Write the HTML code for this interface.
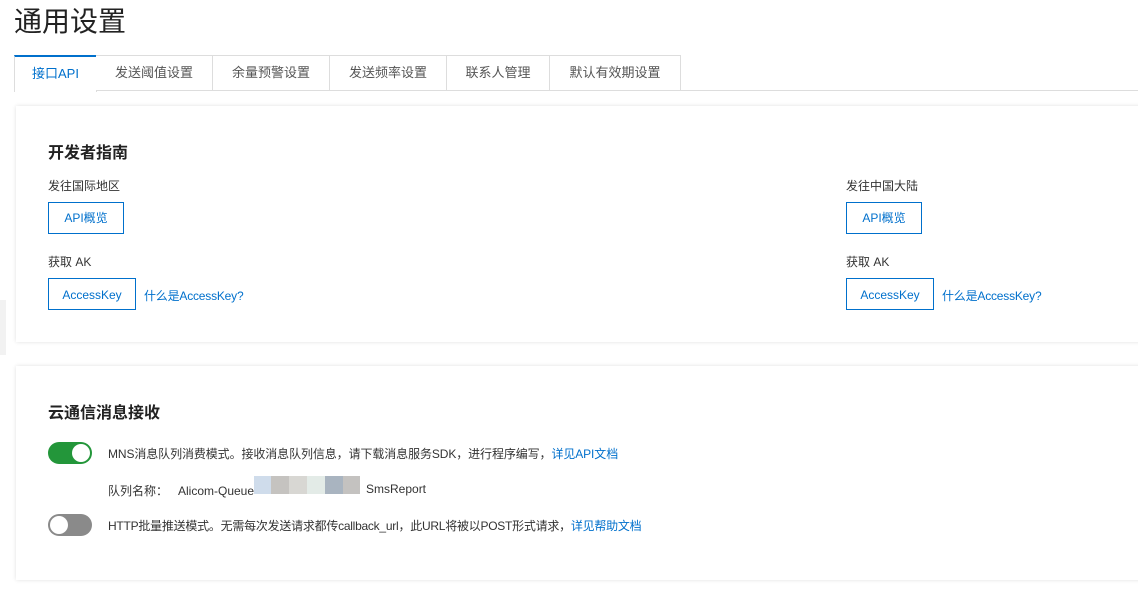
<!DOCTYPE html>
<html><head><meta charset="utf-8"><style>
body{margin:0;width:1138px;height:590px;background:#fff;font-family:"Liberation Sans","Noto Sans CJK SC",sans-serif;color:#333;position:relative;overflow:hidden;font-size:12px}
.abs{position:absolute}
h1{position:absolute;left:14px;top:2px;margin:0;font-size:28px;font-weight:normal;color:#222;line-height:40px}
.tabs{position:absolute;left:14px;top:55px;height:35px;right:0;border-bottom:1px solid #ddd}
.tab{position:absolute;top:0;height:34px;border:1px solid #ddd;border-bottom:none;border-left:none;text-align:center;line-height:34px;font-size:13px;color:#555;background:#fff}
.tab.act{border-top:2px solid #0070cc;color:#0070cc;height:35px;line-height:33px;border-left:1px solid #ddd}
.card{position:absolute;left:16px;right:-10px;background:#fff;box-shadow:0 0 4px rgba(0,0,0,.12)}
.t{font-size:16px;font-weight:bold;color:#222}
.btn{position:absolute;border:1px solid #0070cc;color:#0070cc;text-align:center;font-size:12px;box-sizing:border-box}
a{color:#0070cc;text-decoration:none}
.sw{position:absolute;width:44px;height:22px;border-radius:11px}
.sw i{position:absolute;top:2px;width:18px;height:18px;border-radius:50%;background:#fff}
</style></head><body>
<h1>通用设置</h1>
<div class="tabs">
<div class="tab act" style="left:0;width:81px">接口API</div>
<div class="tab" style="left:82px;width:116px">发送阈值设置</div>
<div class="tab" style="left:199px;width:116px">余量预警设置</div>
<div class="tab" style="left:316px;width:116px">发送频率设置</div>
<div class="tab" style="left:433px;width:102px">联系人管理</div>
<div class="tab" style="left:536px;width:130px">默认有效期设置</div>
</div>
<div class="abs" style="left:0;top:300px;width:6px;height:55px;background:#f2f2f2"></div>
<div class="card" style="top:106px;height:236px">
<div class="abs t" style="left:32px;top:33px">开发者指南</div>
<div class="abs" style="left:32px;top:71px">发往国际地区</div>
<div class="btn" style="left:32px;top:96px;width:76px;height:32px;line-height:30px">API概览</div>
<div class="abs" style="left:32px;top:147px">获取 AK</div>
<div class="btn" style="left:32px;top:172px;width:88px;height:32px;line-height:32px">AccessKey</div>
<a class="abs" style="left:128px;top:181px;letter-spacing:-0.2px">什么是AccessKey?</a>
<div class="abs" style="left:830px;top:71px">发往中国大陆</div>
<div class="btn" style="left:830px;top:96px;width:76px;height:32px;line-height:30px">API概览</div>
<div class="abs" style="left:830px;top:147px">获取 AK</div>
<div class="btn" style="left:830px;top:172px;width:88px;height:32px;line-height:32px">AccessKey</div>
<a class="abs" style="left:926px;top:181px;letter-spacing:-0.2px">什么是AccessKey?</a>
</div>
<div class="card" style="top:366px;height:214px">
<div class="abs t" style="left:32px;top:33px">云通信消息接收</div>
<div class="sw" style="left:32px;top:76px;background:#23963a"><i style="right:2px"></i></div>
<div class="abs" style="left:92px;top:79px;letter-spacing:-0.1px">MNS消息队列消费模式。接收消息队列信息，请下载消息服务SDK，进行程序编写，<a>详见API文档</a></div>
<div class="abs" style="left:92px;top:116px">队列名称：&nbsp;&nbsp; Alicom-Queue-</div>
<div class="abs" style="left:238px;top:110px;width:106px;height:18px;background:linear-gradient(90deg,#cfdceb 0 16%,#c5c3c0 16% 33%,#d8d7d3 33% 50%,#e3ebe7 50% 67%,#a9b4c0 67% 84%,#c4c2c0 84%)"></div>
<div class="abs" style="left:350px;top:116px">SmsReport</div>
<div class="sw" style="left:32px;top:148px;background:#8a8a8a"><i style="left:2px"></i></div>
<div class="abs" style="left:92px;top:151px;letter-spacing:-0.25px">HTTP批量推送模式。无需每次发送请求都传callback_url，此URL将被以POST形式请求，<a>详见帮助文档</a></div>
</div>
</body></html>
